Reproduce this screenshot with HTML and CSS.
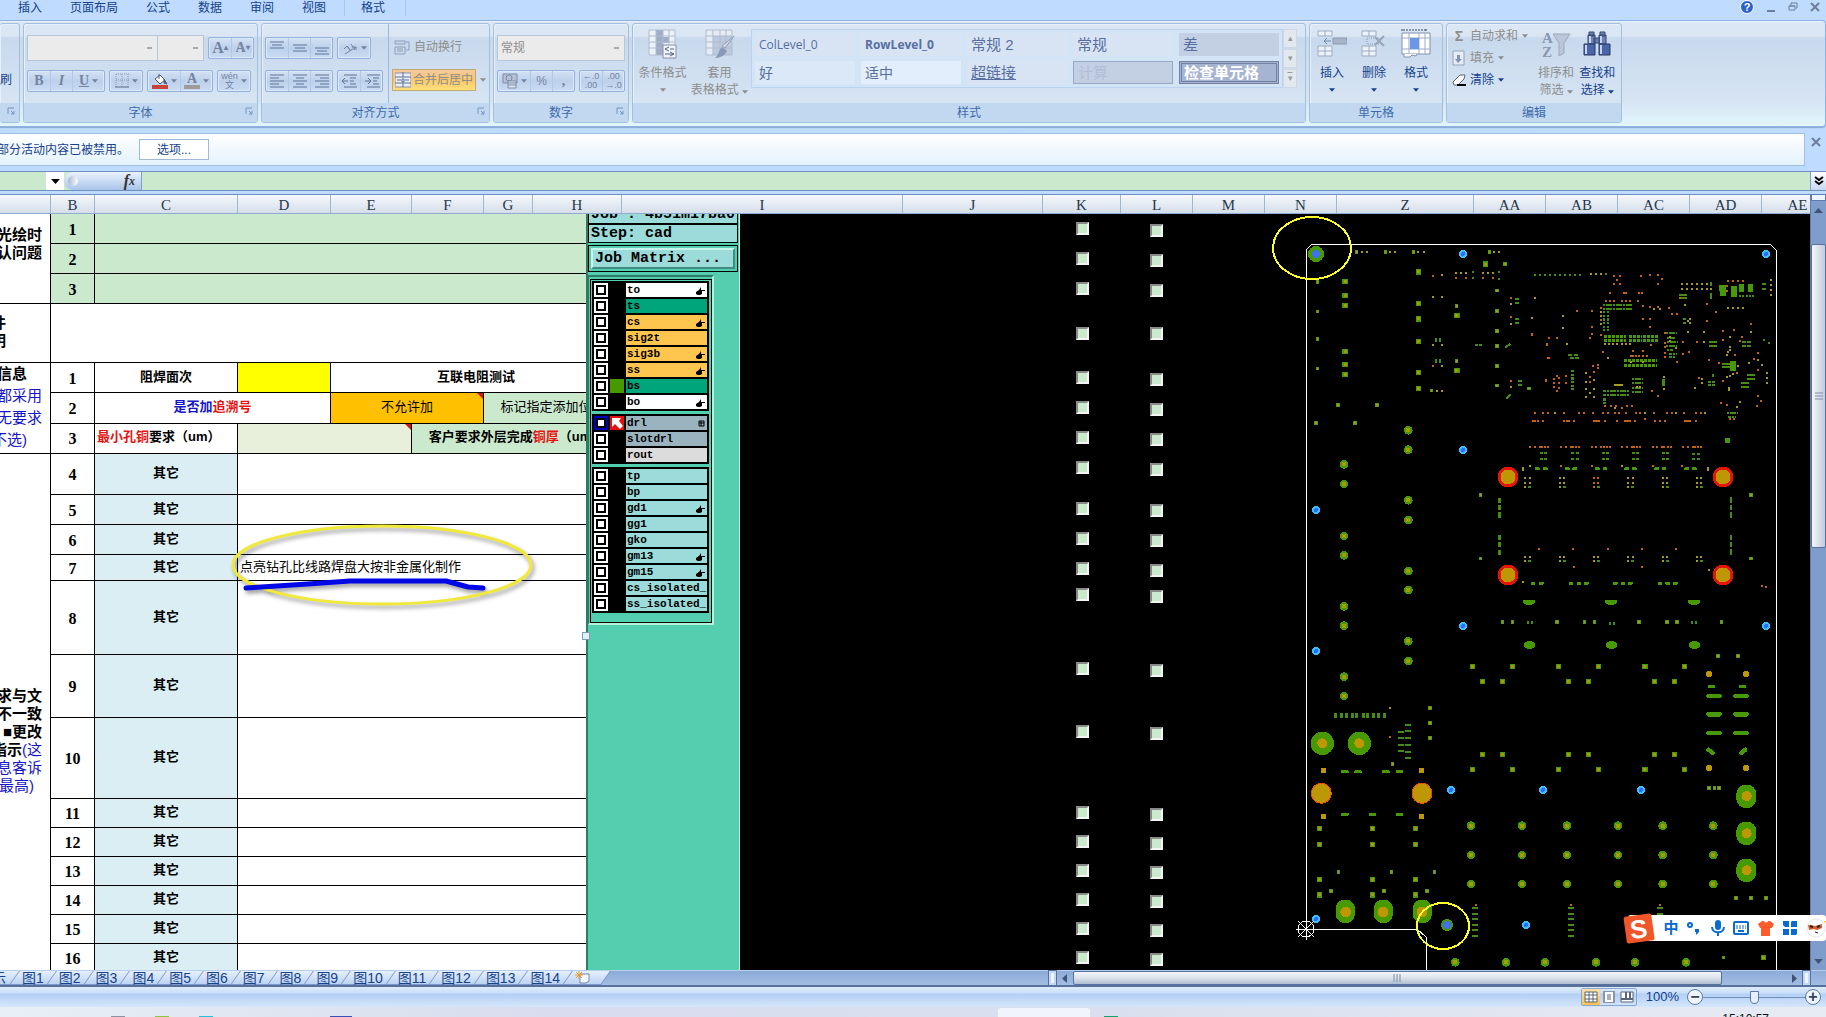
FILE: index.html
```html
<!DOCTYPE html>
<html lang="zh-CN">
  <head>
    <meta charset="UTF-8" />
    <meta name="viewport" content="width=device-width, initial-scale=1.0" />
    <title>工程确认表</title>
    <link rel="stylesheet" href="styles.css" />
  </head>
  <body>
    <!-- shared symbols -->
    <svg class="symbols" width="0" height="0" aria-hidden="true">
      <symbol id="i-arrow" viewBox="0 0 7 4"><path d="M0 0h7L3.500 4z" fill="currentColor" /></symbol>
      <symbol id="i-launch" viewBox="0 0 8 8"><path d="M1 7V1h6M4 4l3 3M7 4v3H4" stroke="#7494bd" fill="none" /></symbol>
      <symbol id="i-x" viewBox="0 0 10 10"><path d="M1 1l8 8M9 1L1 9" stroke="#6e7f99" stroke-width="2" /></symbol>
      <symbol id="i-hand" viewBox="0 0 9 8"><path d="M0 5l3-2 2-3v3h4v1H6v3L4 8H2L0 7z" fill="#000" /></symbol>
    </svg>

    <nav class="menu">
      <a href="#">插入</a>
      <a href="#">页面布局</a>
      <a href="#">公式</a>
      <a href="#">数据</a>
      <a href="#">审阅</a>
      <a href="#">视图</a>
      <a href="#" class="context-tab">格式</a>
      <div class="window-tools">
        <button aria-label="帮助" class="help">?</button>
        <button aria-label="最小化"><svg width="10" height="10"><path d="M1 9h8" stroke="#6e7f99" stroke-width="2" /></svg></button>
        <button aria-label="还原"><svg width="10" height="10"><path d="M3 3V1h6v5H8M1 4h6v4H1zM1 4h6" stroke="#6e7f99" stroke-width="1" fill="none" /></svg></button>
        <button aria-label="关闭"><svg width="10" height="10"><use href="#i-x" /></svg></button>
      </div>
    </nav>

    <!-- ribbon -->
    <div class="ribbon">
      <section class="group clip-group">
        <div class="group-body"><span>式刷</span></div>
        <div class="group-name"><svg class="launch" width="8" height="8"><use href="#i-launch" /></svg></div>
      </section>

      <section class="group font-group">
        <div class="group-body rows">
          <div class="tool-row">
            <select class="combo font-name" aria-label="字体" disabled><option></option></select><select class="combo font-size" aria-label="字号" disabled><option></option></select>
            <div class="set">
              <button class="letter big" disabled>A<sup>▴</sup></button>
              <button class="letter" disabled>A<sup>▾</sup></button>
            </div>
          </div>
          <div class="tool-row">
            <div class="set">
              <button class="letter" disabled>B</button>
              <button class="letter italic" disabled>I</button>
              <button class="letter wide" disabled><u>U</u><svg width="6" height="4"><use href="#i-arrow" /></svg></button>
            </div>
            <div class="set">
              <button class="wide" aria-label="边框"><svg width="14" height="16"><path d="M1 1h13M1 7h13M1 1v13M7 1v13M13 1v13" stroke="#8d9bb5" stroke-dasharray="1 1" /><path d="M0 14h14" stroke="#5d6b85" /></svg><svg width="6" height="4"><use href="#i-arrow" /></svg></button>
            </div>
            <div class="set">
              <button class="wide" aria-label="填充颜色"><svg width="16" height="16"><path d="M3 6l5-4 5 5-5 4z" fill="#fff" stroke="#4b5d80" /><path d="M7 1v5M12 6l3 5-3-1z" stroke="#4b5d80" fill="#4b5d80" /><path d="M0 12h16v4H0z" fill="#c9423c" /></svg><svg width="6" height="4"><use href="#i-arrow" /></svg></button>
              <button class="wide letter font-color" disabled><span>A</span><svg width="6" height="4"><use href="#i-arrow" /></svg></button>
            </div>
            <div class="set">
              <button class="wide pinyin" disabled><span>wén<br />文</span><svg width="6" height="4"><use href="#i-arrow" /></svg></button>
            </div>
          </div>
        </div>
        <div class="group-name">字体<svg class="launch" width="8" height="8"><use href="#i-launch" /></svg></div>
      </section>

      <section class="group align-group">
        <div class="group-body split">
          <div class="rows">
            <div class="tool-row">
              <div class="set lines">
                <button aria-label="顶端对齐"><svg width="14" height="14"><path d="M0 1h14M2 4h10M0 7h14" /></svg></button>
                <button aria-label="垂直居中"><svg width="14" height="14"><path d="M0 4h14M2 7h10M0 10h14" /></svg></button>
                <button aria-label="底端对齐"><svg width="14" height="14"><path d="M0 7h14M2 10h10M0 13h14" /></svg></button>
              </div>
              <div class="set">
                <button class="wide" aria-label="方向" disabled><svg width="16" height="14"><path d="M2 8l3-3 3 4M5 5l4 5M9 3l4 6M3 13L14 6M10 6h4v3" fill="none" stroke="#7482a0" /></svg><svg width="6" height="4"><use href="#i-arrow" /></svg></button>
              </div>
            </div>
            <div class="tool-row">
              <div class="set lines">
                <button aria-label="左对齐"><svg width="14" height="14"><path d="M0 1h14M0 4h9M0 7h14M0 10h9M0 13h14" /></svg></button>
                <button aria-label="居中"><svg width="14" height="14"><path d="M0 1h14M3 4h8M0 7h14M3 10h8M0 13h14" /></svg></button>
                <button aria-label="右对齐"><svg width="14" height="14"><path d="M0 1h14M5 4h9M0 7h14M5 10h9M0 13h14" /></svg></button>
              </div>
              <div class="set lines">
                <button aria-label="减少缩进"><svg width="16" height="14"><path d="M3 1h13M9 4h6M9 7h4M9 10h6M3 13h13M7 7H1M4 4L1 7l3 3" /></svg></button>
                <button aria-label="增加缩进"><svg width="16" height="14"><path d="M3 1h13M9 4h6M9 7h4M9 10h6M3 13h13M7 7H1M4 4l3 3-3 3" /></svg></button>
              </div>
            </div>
          </div>
          <div class="rows wrap-tools">
            <button class="text-tool off" disabled><svg width="16" height="16"><path d="M1 2h10v3H1zM1 8h10v7H1zM3 10h6M3 12h6M12 3h3v8h-3" fill="none" stroke="#8d9bb5" /></svg>自动换行</button>
            <div class="tool-row">
              <button class="text-tool merge off"><svg width="16" height="16"><path d="M0 1h16v14H0z" fill="#e7eefa" stroke="#8793ad" /><path d="M0 5h16M0 11h16M8 0v5M8 11v4M2 8h4M10 8h4M7 7h2v3H7z" stroke="#60708f" fill="none" /></svg>合并后居中</button>
              <svg class="off" width="6" height="4"><use href="#i-arrow" /></svg>
            </div>
          </div>
        </div>
        <div class="group-name">对齐方式<svg class="launch" width="8" height="8"><use href="#i-launch" /></svg></div>
      </section>

      <section class="group number-group">
        <div class="group-body rows">
          <div class="tool-row">
            <select class="combo number-format" aria-label="数字格式" disabled><option>常规</option></select>
          </div>
          <div class="tool-row between">
            <div class="set">
              <button class="wide" aria-label="会计数字格式" disabled><svg width="16" height="16"><path d="M1 1h14v9H1z" fill="#b6c1d6" stroke="#7d8ba8" /><circle cx="7" cy="5" r="3" fill="none" stroke="#7d8ba8" /><path d="M6 8h8v7H6zM6 10h8M6 12h8" fill="#dfe5f0" stroke="#7d8ba8" /></svg><svg width="6" height="4"><use href="#i-arrow" /></svg></button>
              <button disabled>%</button>
              <button class="letter" disabled>,</button>
            </div>
            <div class="set">
              <button class="decimals" disabled>←.0<br />.00</button>
              <button class="decimals" disabled>.00<br />→.0</button>
            </div>
          </div>
        </div>
        <div class="group-name">数字<svg class="launch" width="8" height="8"><use href="#i-launch" /></svg></div>
      </section>

      <section class="group style-group">
        <div class="group-body">
          <button class="big-tool off" disabled>
            <svg width="30" height="30"><path d="M1 1h26v25H1z" fill="#edf1f8" /><path d="M8 1h7v25H8zM15 8h6v6h-6z" fill="#9eacc6" /><path d="M1 1h26v25H1zM1 7h26M1 13h26M1 19h26M8 1v25M15 1v25M21 1v25" fill="none" stroke="#b0bbcf" /><path d="M15 16h13v13H15z" fill="#f1f4f9" stroke="#8290ae" /><path d="M21 18l-4 2 4 2M22 20h4M17 25h9M22 27l4-2-4-2" fill="none" stroke="#566684" /></svg>
            <span>条件格式</span><svg width="6" height="4"><use href="#i-arrow" /></svg>
          </button>
          <button class="big-tool off" disabled>
            <svg width="30" height="30"><path d="M1 1h26v25H1z" fill="#e6ecf5" /><path d="M8 7h19v19H8z" fill="#bcc9df" /><path d="M1 1h26v25H1zM1 7h26M1 13h26M1 19h26M8 1v25M15 1v25M21 1v25" fill="none" stroke="#b0bbcf" /><path d="M29 7l-9 12-3-2z" fill="#d4dae6" stroke="#909db5" /><path d="M17 18l5 4c-3 5-7 7-12 7 4-3 3-7 7-11z" fill="#8898b6" /></svg>
            <span>套用</span><span>表格格式 <svg width="6" height="4"><use href="#i-arrow" /></svg></span>
          </button>
          <div class="gallery">
            <button class="s-small">ColLevel_0</button>
            <button class="s-small s-bold">RowLevel_0</button>
            <button>常规 2</button>
            <button>常规</button>
            <button class="s-bad">差</button>
            <button class="s-good">好</button>
            <button class="s-neutral">适中</button>
            <button class="s-link">超链接</button>
            <button class="s-calc">计算</button>
            <button class="s-check">检查单元格</button>
          </div>
          <div class="gallery-scroll">
            <button aria-label="上一行">▴</button>
            <button aria-label="下一行">▾</button>
            <button aria-label="其他" class="more">▾</button>
          </div>
        </div>
        <div class="group-name">样式</div>
      </section>

      <section class="group cells-group">
        <div class="group-body">
          <button class="big-tool">
            <svg width="30" height="30"><path d="M1 2h14v5H1zM8 2v5M1 17h14v10H1zM1 22h14M8 17v10" fill="#edf2f9" stroke="#9cabc4" /><path d="M16 9h14v6H16z" fill="#a8b4c9" stroke="#8c99b2" /><path d="M14 12H7M10 9l-3 3 3 3" fill="none" stroke="#7386a8" /></svg>
            <span>插入</span><svg width="6" height="4"><use href="#i-arrow" /></svg>
          </button>
          <button class="big-tool">
            <svg width="30" height="30"><path d="M3 2h14v5H3zM10 2v5M3 17h14v10H3zM3 22h14M10 17v10" fill="#edf2f9" stroke="#9cabc4" /><path d="M8 9h12v6H8z" fill="none" stroke="#8c99b2" stroke-dasharray="1 1" /><path d="M16 8l9 9M25 7l-9 9" stroke="#9aa5b8" stroke-width="2" /></svg>
            <span>删除</span><svg width="6" height="4"><use href="#i-arrow" /></svg>
          </button>
          <button class="big-tool">
            <svg width="30" height="30"><path d="M1 4h28v21H1z" fill="#fff" stroke="#7f90af" /><path d="M1 9h28M1 20h28M8 4v21M18 4v21M24 4v21" stroke="#9aabca" /><path d="M9 9h9v11H9z" fill="#6d97e6" /><path d="M1 0v3M25 0v3M2 1h23" stroke="#3b4b68" stroke-dasharray="2 1" /><path d="M3 25v3h6l2-2 4 1 1-2" fill="#fff" stroke="#7f90af" /></svg>
            <span>格式</span><svg width="6" height="4"><use href="#i-arrow" /></svg>
          </button>
        </div>
        <div class="group-name">单元格</div>
      </section>

      <section class="group edit-group">
        <div class="group-body">
          <div class="edit-list">
            <button class="text-tool off" disabled><b>Σ</b>自动求和 <svg width="6" height="4"><use href="#i-arrow" /></svg></button>
            <button class="text-tool off" disabled><svg width="14" height="16"><path d="M1 1h11v14H1z" fill="#e6ecf5" stroke="#93a2bd" /><path d="M5 5h3v4h2l-4 4-3-4h2z" fill="#8292b2" /></svg>填充 <svg width="6" height="4"><use href="#i-arrow" /></svg></button>
            <button class="text-tool"><svg width="14" height="16"><path d="M1 10l7-7h5l-1 4-6 6H2z" fill="#fff" stroke="#56627a" /><path d="M5 13h9" stroke="#000" stroke-width="2" /></svg>清除 <svg width="6" height="4"><use href="#i-arrow" /></svg></button>
          </div>
          <button class="big-tool off" disabled>
            <svg width="30" height="30"><path d="M12 5h17l-6 9v10l-5 3V14z" fill="#bcc6d8" stroke="#9ba7bd" /><text x="1" y="14" class="sort-letter">A</text><text x="1" y="28" class="sort-letter">Z</text></svg>
            <span>排序和</span><span>筛选 <svg width="6" height="4"><use href="#i-arrow" /></svg></span>
          </button>
          <button class="big-tool">
            <svg width="30" height="30"><path d="M7 3h5v4H7zM18 3h5v4h-5zM6 6h7v9H6zM17 6h7v9h-7zM12 9h6v5h-6z" fill="#6d83ba" stroke="#35466f" /><path d="M2 15h11v11H2zM17 15h11v11H17z" fill="#4b66a8" stroke="#263762" /><path d="M4 16v9M19 16v9M8 7v7M19 7v7" stroke="#c7d5f2" stroke-width="2" /></svg>
            <span>查找和</span><span>选择 <svg width="6" height="4"><use href="#i-arrow" /></svg></span>
          </button>
        </div>
        <div class="group-name">编辑</div>
      </section>
    </div>

    <!-- security message -->
    <div class="message-row">
      <div class="message">
        <span>部分活动内容已被禁用。</span>
        <button>选项...</button>
      </div>
      <button class="plain" aria-label="关闭消息栏"><svg width="10" height="10"><use href="#i-x" /></svg></button>
    </div>

    <div class="formula-row">
      <input class="name-box" aria-label="名称框" />
      <button class="name-drop" aria-label="名称列表"><svg width="9" height="5"><use href="#i-arrow" /></svg></button>
      <button class="fx"><i></i>f<small>x</small></button>
      <input class="formula" aria-label="编辑栏" />
      <button class="expand" aria-label="展开编辑栏"><svg width="10" height="10"><path d="M1 1l4 3 4-3M1 5l4 3 4-3" fill="none" stroke="#000" stroke-width="2" /></svg></button>
    </div>

    <!-- worksheet -->
    <div class="workbook">
      <div class="sheet">
        <div class="col-heads">
          <span></span><span>B</span><span>C</span><span>D</span><span>E</span><span>F</span><span>G</span><span>H</span><span>I</span><span>J</span><span>K</span><span>L</span><span>M</span><span>N</span><span>Z</span><span>AA</span><span>AB</span><span>AC</span><span>AD</span><span>AE</span>
        </div>
        <div class="sheet-body">
          <div class="cells">
            <table>
              <colgroup>
                <col class="w-a" /><col class="w-b" /><col class="w-c" /><col class="w-d" /><col class="w-e" /><col class="w-f" /><col class="w-g" /><col class="w-h" />
              </colgroup>
              <tr class="h30"><td rowspan="3" class="side top"><div><p>光绘时</p><p>认问题</p></div></td><td class="no green">1</td><td colspan="6" class="green"></td></tr>
              <tr class="h30"><td class="no green">2</td><td colspan="6" class="green"></td></tr>
              <tr class="h30"><td class="no green">3</td><td colspan="6" class="green"></td></tr>
              <tr class="h59"><td class="side"><div><p class="in-3">件</p><p class="in-3">明</p></div></td><td colspan="7"></td></tr>
              <tr class="h30"><td rowspan="3" class="side loose"><div><p class="in-1">信息</p><p class="blue">都采用</p><p class="blue">无要求</p><p class="blue in-1">不选)</p></div></td><td class="no">1</td><td class="label">阻焊面次</td><td class="yellow"></td><td colspan="4" class="label">互联电阻测试</td></tr>
              <tr class="h30"><td class="no">2</td><td colspan="2" class="label"><span class="blue">是否加</span><span class="red">追溯号</span></td><td colspan="2" class="orange noted">不允许加</td><td colspan="2" class="green">标记指定添加位置</td></tr>
              <tr class="h30"><td class="no">3</td><td class="label left"><span class="red">最小孔铜</span>要求（um）</td><td colspan="2" class="pale noted"></td><td colspan="3" class="label green"><span>客户要求外层完成<span class="red">铜厚</span>（um）</span></td></tr>
              <tr class="h41"><td rowspan="15" class="side"><div><p>求与文</p><p>不一致</p><p>■更改</p><p>指示<span class="blue">(这</span></p><p class="blue">息客诉</p><p class="blue in-half">最高)</p></div></td><td class="no">4</td><td class="label other">其它</td><td colspan="5"></td></tr>
              <tr class="h30"><td class="no">5</td><td class="label other">其它</td><td colspan="5"></td></tr>
              <tr class="h30"><td class="no">6</td><td class="label other">其它</td><td colspan="5"></td></tr>
              <tr class="h26"><td class="no">7</td><td class="label other">其它</td><td colspan="5" class="left">点亮钻孔比线路焊盘大按非金属化制作</td></tr>
              <tr class="h74"><td class="no">8</td><td class="label other">其它</td><td colspan="5"></td></tr>
              <tr class="h63"><td class="no">9</td><td class="label other">其它</td><td colspan="5"></td></tr>
              <tr class="h81"><td class="no">10</td><td class="label other">其它</td><td colspan="5"></td></tr>
              <tr class="h29"><td class="no">11</td><td class="label other">其它</td><td colspan="5"></td></tr>
              <tr class="h29"><td class="no">12</td><td class="label other">其它</td><td colspan="5"></td></tr>
              <tr class="h29"><td class="no">13</td><td class="label other">其它</td><td colspan="5"></td></tr>
              <tr class="h29"><td class="no">14</td><td class="label other">其它</td><td colspan="5"></td></tr>
              <tr class="h29"><td class="no">15</td><td class="label other">其它</td><td colspan="5"></td></tr>
              <tr class="h29"><td class="no">16</td><td class="label other">其它</td><td colspan="5"></td></tr>
              <tr class="h29"><td class="no"></td><td class="other"></td><td colspan="5"></td></tr>
              <tr class="h29"><td class="no"></td><td class="other"></td><td colspan="5"></td></tr>
            </table>
            <svg class="mark" width="320" height="100" viewBox="225 515 320 100">
              <ellipse cx="382" cy="565" rx="149" ry="39" fill="none" stroke="#f0e93a" stroke-width="3" />
              <path d="M246 588L308 584L350 581H446L468 587L483 588" fill="none" stroke="#0008e6" stroke-width="5" stroke-linecap="round" stroke-linejoin="round" />
            </svg>
          </div>

          <!-- CAM layer list -->
          <aside class="layers">
            <div class="job">Job : 4b51m17ba0</div>
            <div class="step">Step: cad</div>
            <div class="matrix"><button>Job Matrix ...</button></div>
            <div class="layer-well">
              <div class="layer-box">
                <div class="layer-set">
                  <label class="white"><input type="checkbox" /><i></i><span>to</span><svg width="9" height="8"><use href="#i-hand" /></svg></label>
                  <label class="mask"><input type="checkbox" /><i></i><span>ts</span></label>
                  <label class="signal"><input type="checkbox" /><i></i><span>cs</span><svg width="9" height="8"><use href="#i-hand" /></svg></label>
                  <label class="signal"><input type="checkbox" /><i></i><span>sig2t</span></label>
                  <label class="signal"><input type="checkbox" /><i></i><span>sig3b</span><svg width="9" height="8"><use href="#i-hand" /></svg></label>
                  <label class="signal"><input type="checkbox" /><i></i><span>ss</span><svg width="9" height="8"><use href="#i-hand" /></svg></label>
                  <label class="mask"><input type="checkbox" /><i class="shown"></i><span>bs</span></label>
                  <label class="white"><input type="checkbox" /><i></i><span>bo</span><svg width="9" height="8"><use href="#i-hand" /></svg></label>
                </div>
                <div class="layer-set">
                  <label class="drill"><input type="checkbox" class="picked" /><i class="work"><svg width="14" height="14"><path d="M2 2h9L9 5l4 5-3 3-5-5-3 3z" fill="#fff" /></svg></i><span>drl</span><svg width="7" height="7"><path d="M1 1h5v5H1zM3 1v5M1 3h5" fill="none" stroke="#000" /></svg></label>
                  <label class="drill"><input type="checkbox" /><i></i><span>slotdrl</span></label>
                  <label class="rout"><input type="checkbox" /><i></i><span>rout</span></label>
                </div>
                <div class="layer-set">
                  <label><input type="checkbox" /><i></i><span>tp</span></label>
                  <label><input type="checkbox" /><i></i><span>bp</span></label>
                  <label><input type="checkbox" /><i></i><span>gd1</span><svg width="9" height="8"><use href="#i-hand" /></svg></label>
                  <label><input type="checkbox" /><i></i><span>gg1</span></label>
                  <label><input type="checkbox" /><i></i><span>gko</span></label>
                  <label><input type="checkbox" /><i></i><span>gm13</span><svg width="9" height="8"><use href="#i-hand" /></svg></label>
                  <label><input type="checkbox" /><i></i><span>gm15</span><svg width="9" height="8"><use href="#i-hand" /></svg></label>
                  <label><input type="checkbox" /><i></i><span>cs_isolated_</span></label>
                  <label><input type="checkbox" /><i></i><span>ss_isolated_</span></label>
                </div>
              </div>
            </div>
            <b class="handle"></b>
          </aside>

          <!-- board view -->
          <div class="board">
            <svg class="plot" width="1070" height="756" viewBox="740 214 1070 756">
              <!-- upper left quarter -->
              <svg x="1260" y="200" width="290" height="400" viewBox="0 0 870 1200">
                <defs>
                  <path id="ul-l" d="M445 691h0M445 749h0M445 901h0M445 960h0M445 1113h0M445 1170h0M252 793h0M252 852h0M252 1008h0M252 1066h0" />
                  <path id="ul-m" d="M255 244h0M255 286h0M255 316h0M255 454h0M255 493h0M255 523h0M475 215h0M475 310h0M475 356h0M475 424h0M475 517h0M475 565h0M590 346h0M590 511h0M676 192h0" />
                  <path id="ul-s" d="M172 246h0M172 335h0M172 417h0M172 506h0M234 615h0M351 615h0M168 669h0M285 669h0M590 318h0M590 483h0M711 272h0M711 333h0M711 393h0M711 438h0M711 498h0M711 557h0M735 192h0M662 885h0M662 1075h0M290 156h0M376 156h0M460 156h0M688 156h0M514 572h0M807 565h0" />
                </defs>
                <use href="#ul-l" class="green-l" /><use href="#ul-l" class="olive-l" />
                <use href="#ul-m" class="green-m" /><use href="#ul-m" class="olive-m" />
                <use href="#ul-s" class="green-s" /><use href="#ul-s" class="olive-s" />
                <path class="dot-o" d="M306 157h0M321 157h0M391 157h0M406 157h0M475 157h0M491 157h0M703 157h0M718 157h0M547 226h0M547 290h0M547 434h0M547 499h0M530 573h0M545 573h0M752 313h0M752 371h0M752 562h0M825 294h0M816 354h0M518 290h0M518 434h0M604 219h0M589 219h0M619 219h0M669 219h0M684 219h0M698 219h0M825 226h0M840 226h0M855 226h0" />
                <path class="dot-r" d="M518 228h0M589 233h0M619 235h0M669 235h0M698 235h0M518 498h0M752 293h0M752 351h0M752 543h0M816 405h0M867 415h0M862 434h0M867 474h0M858 542h0" />
                <path class="dot-g" d="M639 217h0M639 234h0M718 217h0M718 236h0M528 418v6M540 418v6M528 480v6M540 480v6M647 436h3M660 436h3M768 298h6M768 308h6M768 357h6M768 369h6M777 544h6M777 556h6M739 441l9 -8M741 594l9 -8" />
                <path class="tall-g" d="M718 897v8M718 920v6M718 940v10M718 1008v8M718 1030v8M718 1053v8" />
              </svg>

              <!-- upper right quarter -->
              <svg x="1500" y="200" width="326" height="400" viewBox="0 0 978 1200">
                <path class="dot-g" d="M105 225h0M120 225h0M135 225h0M150 225h0M165 225h0M180 225h0M195 225h0M210 225h0M225 225h0M240 225h0M317 222h0M540 284h18M540 295h18M634 250v4M634 283v12M720 287v0M730 287v0M740 287v0M750 287v0M760 287v0M788 252h6M788 266h6M788 252v0M552 357h3M552 369h3M630 427h6M643 427h6M630 437h6M643 437h6M730 427h6M743 427h6M730 437h6M743 437h6M792 420h0M807 430h0M668 492h6M680 492h6M668 502h6M680 502h6M745 525h6M757 525h6M745 538h6M757 538h6M726 550h6M739 550h6M726 562h6M739 562h6M801 518h0M801 533h0M801 548h0M640 525v3M628 545h3M640 545h3M628 556h3M640 556h3M208 464h6M226 464h6M214 475h6M228 475h6" />
                <path class="dot-o" d="M272 223h0M287 223h0M302 223h0M545 252h0M560 252h0M575 252h0M590 252h0M605 252h0M620 252h0M545 267h0M560 267h0M575 267h0M590 267h0M605 267h0M620 267h0M634 267h0M813 240h0M813 254h0M813 270h0M813 284h0M685 325h0M700 325h0M715 325h0M730 325h0M105 294h0M96 354h0M189 348h0M189 383h0M462 326h0M480 326h0M555 315h0M563 395h0M570 358h0M570 368h0M564 363h0M303 335h0M303 348h0M303 372h0M315 432h0M327 432h0M339 432h0M351 432h0M367 432h0M379 432h0M391 432h0M200 432h0M324 474h0M612 397h0M690 411h0M690 440h0M690 449h0M685 457h0M680 464h0M612 426h0M714 498h0M690 528h0M698 522h0M682 532h0M687 563v6M606 538h0M606 549h0M585 563h0M257 520h0M257 545h0M257 568h0M282 540h0M282 568h0M270 580h0M257 591h0M282 591h0M492 532h0M492 567h0M345 555h20M345 625h0M720 605h0M712 620h0M753 395h0M773 480h0M748 490h0M786 496h0M70 805v6M624 805v6M70 1147h0" />
                <path class="dot-r" d="M343 229h0M361 229h0M352 240h0M343 253h0M361 253h0M424 229h0M450 226h0M473 226h0M485 238h0M473 253h0M331 280h0M371 280h6M416 280h0M426 280h0M318 304h0M330 304h0M343 304h0M367 304h0M379 304h0M391 304h0M415 304h0M430 317h0M450 322h0M474 320h0M508 324h0M517 342h0M530 342h0M430 356h0M450 356h0M450 380h0M277 333h0M277 382h0M277 403h0M271 415h0M232 333h0M148 415h0M172 415h0M142 433h0M145 474h0M303 325h0M303 360h0M303 405h0M308 455h0M400 452h0M428 452h0M452 436h0M392 468h0M400 468h0M409 468h0M418 468h0M428 468h0M440 468h0M494 400h0M494 430h0M494 442h0M494 460h0M494 472h0M685 243h0M700 243h0M715 243h0M730 243h0M680 258h0M680 273h0M540 295h0M621 313h0M621 362h0M649 336h0M753 372h0M702 391h0M670 394h0M592 425h0M668 419h0M726 410h0M720 423h0M773 458h0M762 478h0M773 510h0M706 464h0M628 481h0M657 490h0M550 463h0M567 455h0M531 487h0M550 425h0M668 544h0M710 518h0M597 533h0M137 541h0M163 537h0M172 528h0M178 535h0M163 549h0M178 549h0M163 562h0M172 572h0M178 565h0M197 528h0M197 548h0M270 532h0M282 516h0M270 546h0M280 498h0M294 495h0M294 504h0M455 573h0M473 587h0M662 610h0M680 615h0M773 588h0M782 603h0M770 619h0M690 656h0M703 656h0M33 293h0M33 351h0M33 543h0M315 617h0M333 617h0M348 617h0M365 625h0M380 617h0M395 617h0M96 403h0" />
                <path class="dot-r" d="M105 638h0M129 638h0M144 638h0M193 638h0M238 638h0M252 638h0M280 638h0M309 638h0M324 638h0M345 638h0M358 638h0M377 638h0M407 638h0M420 638h0M462 638h0M500 638h0M515 638h0M553 638h0M588 638h0M602 638h0M98 664h7M115 664h0M129 664h0M192 664h0M200 664h8M222 664h0M282 664h8M298 664h0M314 664h0M350 664h0M375 664h15M405 664h0M465 664h0M481 664h0M496 664h0M555 664h15M587 664h0M435 658h0" />
                <path class="dot-r" d="M90 742h0M104 742h0M119 742h0M126 742h0M136 742h0M145 742h0M184 742h0M198 742h0M213 742h0M220 742h0M229 742h0M238 742h0M275 742h0M289 742h0M303 742h0M312 742h0M321 742h0M330 742h0M366 742h0M380 742h0M395 742h0M402 742h0M411 742h0M420 742h0M458 742h0M472 742h0M486 742h0M493 742h0M503 742h0M512 742h0M549 742h0M563 742h0M578 742h0M585 742h0M594 742h0M603 742h0M184 798h0M275 798h0M458 798h0M547 798h0M118 1048h0M220 1048h0M324 1048h0M426 1048h0M528 1048h0M221 1101h0M426 1101h0M786 1158h0M798 1160h0M282 833h0M295 833h0M282 848h0M295 848h0M282 862h0" />
                <path class="dot-o" d="M165 638h0M435 638h0M528 638h0M615 638h0M90 798h0M366 798h0M628 1109h0M76 833h0M89 833h0M76 848h0M89 848h0M76 862h0M180 833h0M193 833h0M180 848h0M193 848h0M180 862h0M385 833h0M398 833h0M385 848h0M398 848h0M385 862h0M488 833h0M500 833h0M488 848h0M500 848h0M488 862h0M591 833h0M604 833h0M591 848h0M604 848h0M591 862h0M76 1070h0M89 1070h0M76 1084h0M180 1070h0M193 1070h0M180 1084h0M282 1070h0M295 1070h0M282 1084h0M385 1070h0M398 1070h0M385 1084h0M488 1070h0M500 1070h0M488 1084h0M591 1070h0M604 1070h0M591 1084h0" />
                <path class="dot-g" d="M88 862h3M192 862h3M294 862h3M397 862h3M500 862h3M603 862h3M88 1084h3M192 1084h3M294 1084h3M397 1084h3M500 1084h3M603 1084h3M122 760h3M136 760h3M122 777h3M136 777h3M215 760h3M230 760h3M215 777h3M230 777h3M308 760h3M320 760h3M308 777h3M320 777h3M399 760h3M412 760h3M399 777h3M412 777h3M489 760h3M502 760h3M489 777h3M502 777h3M580 763h3M593 763h3M580 778h3M593 778h3" />
                <path class="oval-g" d="M109 806h6M133 806h6M199 806h6M221 806h6M289 806h6M312 806h6M377 806h6M400 806h6M467 806h6M489 806h6M557 806h6M580 806h6M96 1150h6M121 1150h6M210 1150h6M234 1150h6M256 1150h6M343 1150h6M366 1150h6M388 1150h6M477 1150h6M500 1150h6M523 1150h6" />
                <path class="tall-g" d="M693 896v8M693 918v8M693 940v10M693 1008v8M693 1030v8M693 1052v8M490 542v12" />
                <path class="rows-g" d="M308 315h92M308 327h92M310 574h80M310 584h80M395 537h34M395 550h34M395 563h34M395 576h34M680 638h34M685 650h24M497 400h34M500 414h26M500 426h34M497 438h34M500 450h20M508 462h24M508 472h20" />
                <path class="cols-g" d="M312 333v60M324 333v60M217 510v60M313 595v20" />
                <path class="block-g" d="M312 410h66M312 421h66M388 410h38M388 421h38M430 410h46M430 421h46M372 481h100M372 497h100" />
                <path class="green-m" d="M666 264h3M668 280h0M702 265h0M702 281h0M724 260v6M751 260v6M698 491h2M698 505h2M682 721h0" />
                <path class="dot-o" d="M392 487h0M428 487h0M410 560h0M421 560h0M510 412h0M510 424h0M527 445h0" />
                <path class="green-s" d="M753 885h0M753 1075h0" /><path class="olive-s" d="M753 885h0M753 1075h0M801 518h0M801 533h0M801 548h0" />
              </svg>

              <!-- lower left quarter -->
              <svg x="1260" y="600" width="290" height="417" viewBox="0 0 870 1251">
                <defs>
                  <path id="ll-l" d="M252 19h0M252 77h0M252 230h0M252 288h0M445 124h0M445 183h0M633 677h0M633 765h0M633 852h0M786 677h0M786 765h0M786 852h0M586 1087h0M738 1087h0M855 1087h0" />
                  <path id="ll-m" d="M178 685h0M178 733h0M178 838h0M178 884h0M337 685h0M337 733h0M337 838h0M337 884h0M466 685h0M466 733h0M466 838h0M466 884h0M637 199h0M757 199h0M667 244h0M727 244h0M667 463h0M727 463h0M637 508h0M757 508h0" />
                  <path id="ll-s" d="M510 324h0M510 369h0M510 414h0M398 492h0M235 816h0M394 816h0M523 816h0M213 873h0M372 873h0M501 873h0M727 66h0M757 66h0" />
                </defs>
                <use href="#ll-l" class="green-l" /><use href="#ll-l" class="olive-l" />
                <use href="#ll-m" class="green-m" /><use href="#ll-m" class="olive-m" />
                <use href="#ll-s" class="green-s" /><use href="#ll-s" class="olive-s" />
                <path class="strip-g" d="M226 339v14M244 339v14M259 339v14M278 339v14M289 339v14M310 339v14M322 339v14M340 339v14M355 339v14M373 339v14" />
                <path class="oval-g" d="M246 515h16M287 515h14M369 515h16M411 515h14M246 643h16M330 643h14M411 643h14" />
                <path class="dot-g" d="M418 395h10M418 415h10M418 434h10M418 452h10M439 376h10M439 394h10M439 415h10M439 434h10M439 455h10M439 473h10M803 66v4M815 66v4M640 925h10M640 943h10M640 958h10M640 976h10M640 989h10M640 1009h10" />
                <path class="dot-r" d="M390 411h0M647 914h0" /><path class="dot-o" d="M390 324h0" />
                <path class="orange-m" d="M190 511h0M484 511h0M190 649h0M484 649h0" />
                <g class="big-green"><circle cx="187" cy="430" r="35" /><circle cx="298" cy="430" r="35" /><rect x="227" y="899" width="58" height="70" rx="27" /><rect x="341" y="899" width="58" height="70" rx="27" /><rect x="458" y="899" width="58" height="70" rx="27" /></g>
                <g class="orange"><circle cx="187" cy="430" r="15" /><circle cx="298" cy="430" r="15" /><circle cx="257" cy="936" r="16" /><circle cx="369" cy="936" r="16" /><circle cx="486" cy="936" r="16" /></g>
                <g class="orange ring-thin"><circle cx="184" cy="580" r="30" /><circle cx="486" cy="580" r="30" /></g>
              </svg>

              <!-- lower right quarter -->
              <svg x="1500" y="600" width="326" height="417" viewBox="0 0 978 1251">
                <defs>
                  <path id="lr-l" d="M201 677h0M201 765h0M201 852h0M354 677h0M354 765h0M354 852h0M488 677h0M488 765h0M488 852h0M640 677h0M640 765h0M640 852h0M288 1087h0M405 1087h0M558 1087h0" />
                  <path id="lr-m" d="M175 199h0M295 199h0M434 199h0M553 199h0M205 244h0M265 244h0M463 244h0M523 244h0M205 463h0M265 463h0M463 463h0M523 463h0M175 508h0M295 508h0M434 508h0M553 508h0M790 1072h0" />
                  <path id="lr-s" d="M171 66h0M253 66h0M283 66h0M417 66h0M501 66h0M531 66h0M664 66h0M654 168h0M714 168h0M627 564h0M643 564h0M657 564h0M708 894h0M753 894h0M798 894h0M670 1072h0" />
                </defs>
                <use href="#lr-l" class="green-l" /><use href="#lr-l" class="olive-l" />
                <use href="#lr-m" class="green-m" /><use href="#lr-m" class="olive-m" />
                <use href="#lr-s" class="green-s" /><use href="#lr-s" class="olive-s" />
                <path class="dot-g" d="M330 68v4M342 68v4M576 66v4M588 66v4M208 925h10M208 943h10M208 958h10M208 976h10M208 989h10M208 1008h10M475 925h10M475 943h10" />
                <path class="dot-r" d="M214 914h0M480 914h0" />
                <path class="oval-g" d="M627 259h14M720 259h14" />
                <path class="bar-g" d="M625 288h34M706 288h34M625 343h34M706 343h34M625 398h34M706 398h34M625 449l14 10M736 449l-12 10" />
                <g class="big-green"><ellipse cx="87" cy="3" rx="19" ry="12" /><ellipse cx="333" cy="3" rx="19" ry="12" /><ellipse cx="582" cy="3" rx="19" ry="12" /><ellipse cx="88" cy="135" rx="17" ry="12" /><ellipse cx="334" cy="135" rx="17" ry="12" /><ellipse cx="583" cy="135" rx="17" ry="12" /><rect x="709" y="554" width="60" height="70" rx="28" /><rect x="709" y="665" width="60" height="70" rx="28" /><rect x="709" y="776" width="60" height="70" rx="28" /></g>
                <g class="orange"><circle cx="627" cy="222" r="9" /><circle cx="738" cy="222" r="9" /><circle cx="627" cy="504" r="9" /><circle cx="738" cy="504" r="9" /><circle cx="740" cy="588" r="15" /><circle cx="740" cy="700" r="15" /><circle cx="740" cy="811" r="15" /></g>
              </svg>

              <g class="orange ring"><circle cx="1508" cy="477" r="9" /><circle cx="1723" cy="477" r="9" /><circle cx="1508" cy="575" r="9" /><circle cx="1723" cy="575" r="9" /></g>
              <g class="big-green"><circle cx="1316" cy="254" r="8" /><circle cx="1447" cy="925" r="6" /></g>
              <g class="hole"><circle cx="1463" cy="254" r="3" /><circle cx="1463" cy="450" r="3" /><circle cx="1316" cy="510" r="3" /><circle cx="1766" cy="254" r="3" /><circle cx="1316" cy="651" r="3" /><circle cx="1463" cy="626" r="3" /><circle cx="1766" cy="626" r="3" /><circle cx="1451" cy="790" r="3" /><circle cx="1543" cy="790" r="3" /><circle cx="1641" cy="790" r="3" /><circle cx="1316" cy="919" r="3" /><circle cx="1526" cy="925" r="3" /></g>
              <g class="lit"><circle cx="1316" cy="254" r="4" /><circle cx="1447" cy="925" r="4" /></g>
              <path class="outline" d="M1306 929V250L1312 244H1770L1776 250V970M1306 929H1417L1426 937V970" />
              <path class="outline" d="M1296 929h20M1306 919v20M1298 921l16 16M1314 921l-16 16M1298 929a8 8 0 1 0 16 0a8 8 0 1 0 -16 0" />
              <g class="circled"><ellipse cx="1312" cy="248" rx="39" ry="31" /><ellipse cx="1443" cy="926" rx="26" ry="23" /></g>
            </svg>

            <div class="ticks">
              <input type="checkbox" aria-label="K1" /><input type="checkbox" aria-label="L1" />
              <input type="checkbox" aria-label="K2" /><input type="checkbox" aria-label="L2" />
              <input type="checkbox" aria-label="K3" /><input type="checkbox" aria-label="L3" />
              <input type="checkbox" aria-label="K说明" class="mid" /><input type="checkbox" aria-label="L说明" class="mid" />
              <input type="checkbox" aria-label="K信息1" /><input type="checkbox" aria-label="L信息1" />
              <input type="checkbox" aria-label="K信息2" /><input type="checkbox" aria-label="L信息2" />
              <input type="checkbox" aria-label="K信息3" /><input type="checkbox" aria-label="L信息3" />
              <input type="checkbox" aria-label="K4" /><input type="checkbox" aria-label="L4" />
              <input type="checkbox" aria-label="K5" /><input type="checkbox" aria-label="L5" />
              <input type="checkbox" aria-label="K6" /><input type="checkbox" aria-label="L6" />
              <input type="checkbox" aria-label="K7" /><input type="checkbox" aria-label="L7" />
              <input type="checkbox" aria-label="K8" /><input type="checkbox" aria-label="L8" />
              <input type="checkbox" aria-label="K9" /><input type="checkbox" aria-label="L9" />
              <input type="checkbox" aria-label="K10" /><input type="checkbox" aria-label="L10" />
              <input type="checkbox" aria-label="K11" /><input type="checkbox" aria-label="L11" />
              <input type="checkbox" aria-label="K12" /><input type="checkbox" aria-label="L12" />
              <input type="checkbox" aria-label="K13" /><input type="checkbox" aria-label="L13" />
              <input type="checkbox" aria-label="K14" /><input type="checkbox" aria-label="L14" />
              <input type="checkbox" aria-label="K15" /><input type="checkbox" aria-label="L15" />
              <input type="checkbox" aria-label="K16" /><input type="checkbox" aria-label="L16" />
            </div>
          </div>
        </div>
      </div>
      <div class="vscroll">
        <i class="split-box"></i>
        <button aria-label="向上滚动"><svg width="9" height="5"><path d="M0 5h9L4.500 0z" fill="#3f5475" /></svg></button>
        <div class="vtrack"><div class="vthumb"><svg width="8" height="8"><path d="M0 1h8M0 4h8M0 7h8" stroke="#7c8ca8" /></svg></div></div>
        <button aria-label="向下滚动"><svg width="9" height="5"><use href="#i-arrow" /></svg></button>
      </div>
    </div>

    <!-- sheet tabs and horizontal scroll -->
    <div class="tab-row">
      <div class="sheet-tabs">
        <a href="#" class="cut">示</a><a href="#">图1</a><a href="#">图2</a><a href="#">图3</a><a href="#">图4</a><a href="#">图5</a><a href="#">图6</a><a href="#">图7</a><a href="#">图8</a><a href="#">图9</a><a href="#">图10</a><a href="#">图11</a><a href="#">图12</a><a href="#">图13</a><a href="#">图14</a>
        <a href="#" class="new-tab" aria-label="插入工作表"><svg width="16" height="14"><path d="M5 3h9v7l-3 2H5z" fill="#f4f8ff" stroke="#7386a8" /><path d="M4 0v8M0 4h8M1 1l6 6M7 1L1 7" stroke="#e79b2c" /></svg></a>
      </div>
      <div class="hscroll">
        <i class="split-box"></i>
        <button aria-label="向左滚动"><svg width="5" height="9"><path d="M5 0v9L0 4.500z" fill="#3f5475" /></svg></button>
        <div class="htrack"><div class="hthumb"><svg width="8" height="8"><path d="M1 0v8M4 0v8M7 0v8" stroke="#7c8ca8" /></svg></div></div>
        <button aria-label="向右滚动"><svg width="5" height="9"><path d="M0 0v9l5-4.500z" fill="#3f5475" /></svg></button>
        <i class="split-box"></i>
      </div>
    </div>

    <div class="status">
      <div class="views">
        <button aria-label="普通" class="on"><svg width="14" height="12"><path d="M1 1h12v10H1z" fill="#fff" /><path d="M1 1h12v10H1zM1 4h12M1 8h12M5 1v10M9 1v10" fill="none" stroke="#5b6478" /></svg></button>
        <button aria-label="页面布局"><svg width="14" height="12"><path d="M1 0h12v12H1z" fill="#8b95a8" /><path d="M3 1h8v10H3z" fill="#fff" /><path d="M5 4h4M5 6h4M5 8h4" stroke="#5b6478" /></svg></button>
        <button aria-label="分页预览"><svg width="14" height="12"><path d="M1 1h12v10H1z" fill="#fff" stroke="#5b6478" /><path d="M6 1v6M10 1v6M1 8h12" stroke="#5b6478" stroke-width="2" /></svg></button>
      </div>
      <span class="percent">100%</span>
      <button class="round" aria-label="缩小">−</button>
      <input type="range" aria-label="显示比例" min="0" max="100" value="50" />
      <button class="round" aria-label="放大">+</button>
    </div>

    <div class="taskbar">
      <i class="app grey"></i><i class="app lime"></i><i class="app cyan"></i><i class="app navy"></i>
      <i class="active-app"></i><i class="app jade"></i>
      <time>15:10:57</time>
    </div>

    <!-- floating input method bar -->
    <div class="ime">
      <svg width="34" height="32"><rect x="3" y="3" width="28" height="27" rx="2" fill="#f0562a" transform="rotate(-8 17 16)" /><text x="8" y="26" class="ime-s" transform="rotate(-6 17 16)">S</text></svg>
      <b>中</b>
      <svg width="16" height="16"><circle cx="4" cy="5" r="2" fill="none" stroke="#0a6ad0" stroke-width="2" /><path d="M9 9h4v3l-3 3v-3H9z" fill="#0a6ad0" /></svg>
      <svg width="16" height="16"><rect x="5" y="0" width="6" height="10" rx="3" fill="#0a6ad0" /><path d="M2 7c0 7 12 7 12 0M8 12v4" fill="none" stroke="#0a6ad0" stroke-width="2" /></svg>
      <svg width="16" height="16"><rect x="1" y="2" width="14" height="12" rx="1" fill="none" stroke="#0a6ad0" stroke-width="2" /><path d="M3 6h10M3 8h10" stroke="#0a6ad0" stroke-dasharray="2 1" /><path d="M5 11h6" stroke="#0a6ad0" stroke-width="2" /></svg>
      <svg width="18" height="16"><path d="M5 1h2c1 2 3 2 4 0h2l4 3-2 4h-2v8H4V8H3L1 4z" fill="#ff5c2c" /></svg>
      <svg width="16" height="16"><path d="M1 1h6v6H3L1 5zM10 1h5v6H9V2zM1 9h6v6H1zM9 9h6v5l-1 1H9z" fill="#0a6ad0" /></svg>
      <svg width="20" height="20"><circle cx="10" cy="10" r="9" fill="#fff" stroke="#e6e6ee" /><path d="M2 7l7 1 7-2v4l-5 2-3-1-5 1z" fill="#dc5a2e" /><path d="M4 8l3 1M11 9l3-1" stroke="#222" stroke-width="2" /><path d="M9 14l3 1" stroke="#222" /><path d="M18 3l1 3 1-3z" fill="#f7c21f" /></svg>
    </div>
  </body>
</html>
```
FILE: styles.css
```css
* {
  box-sizing: border-box;
}

body {
  margin: 0;
  height: 100vh;
  overflow: hidden;
  display: flex;
  flex-direction: column;
  background: #bfdbff;
  color: #15428b;
  font-family: "Liberation Sans", "Noto Sans CJK SC", sans-serif;
  font-size: 12px;
  line-height: 16px;
  position: relative;
}

button,
input,
select {
  font: inherit;
  color: inherit;
  margin: 0;
  padding: 0;
  border: 0;
  background: none;
}

button {
  display: flex;
  align-items: center;
  justify-content: center;
  white-space: nowrap;
}

a {
  color: inherit;
  text-decoration: none;
}

p {
  margin: 0;
}

svg {
  flex: none;
}

.symbols {
  position: absolute;
}

/* menu */
.menu {
  height: 20px;
  flex: none;
  display: flex;
  align-items: flex-start;
  padding-left: 4px;
}

.menu a {
  padding: 0 14px;
}

.menu .context-tab {
  margin-left: 4px;
  border-left: 1px solid #a9c8f0;
  border-right: 1px solid #a9c8f0;
  padding: 0 20px 0 16px;
}

.window-tools {
  margin-left: auto;
  display: flex;
  gap: 12px;
  padding-right: 6px;
}

.window-tools button {
  width: 10px;
  height: 14px;
}

.window-tools .help {
  width: 14px;
  border: 1px solid #fff;
  border-radius: 50%;
  background: #2a62c8;
  color: #fff;
  font-size: 11px;
  font-weight: bold;
}

/* ribbon */
.ribbon {
  height: 107px;
  flex: none;
  display: flex;
  gap: 3px;
  padding: 2px 0 3px;
  border: solid #8db2e3;
  border-width: 1px 1px 1px 0;
  border-radius: 0 4px 4px 0;
  box-shadow: inset 0 1px #e6f1ff, 0 1px 1px #88a8cc;
  background: linear-gradient(#dce7f5 0, #dbe6f4 15px, #c8d9ed 17px, #d6e4f3 80px, #e2f6fd);
}

.group {
  flex: none;
  display: flex;
  flex-direction: column;
  border: 1px solid #a4c0dd;
  border-radius: 3px;
  box-shadow: inset 1px 1px #e7f0fa;
  overflow: hidden;
}

.group-body {
  flex: 1;
  display: flex;
  padding: 0 3px;
}

.group-name {
  height: 19px;
  background: #c1d8f0;
  text-align: center;
  color: #3e6aaa;
  line-height: 20px;
  position: relative;
}

.launch {
  position: absolute;
  right: 4px;
  top: 4px;
}

.clip-group {
  width: 20px;
  border-left: 0;
}

.clip-group .group-body {
  padding: 48px 7px 0 0;
  justify-content: flex-end;
  white-space: nowrap;
}

.font-group {
  width: 235px;
}

.align-group {
  width: 229px;
}

.number-group {
  width: 136px;
}

.style-group {
  width: 674px;
}

.cells-group {
  width: 134px;
}

.edit-group {
  width: 176px;
}

.rows {
  display: flex;
  flex-direction: column;
  justify-content: space-around;
  padding-top: 8px;
  padding-bottom: 6px;
}

.tool-row {
  height: 26px;
  display: flex;
  align-items: center;
  gap: 4px;
}

.between {
  justify-content: space-between;
}

.combo {
  height: 26px;
  border: 1px solid #b7c7da;
  background: #ebebeb;
  color: #8d8d8d;
  appearance: none;
  padding-left: 3px;
  opacity: 1;
  background-image: linear-gradient(#aaa, #aaa);
  background-size: 5px 2px;
  background-repeat: no-repeat;
  background-position: right 5px center;
}

.font-name {
  width: 131px;
  margin-right: -5px;
}

.font-size {
  width: 47px;
}

.number-format {
  width: 100%;
}

.set {
  display: flex;
  height: 22px;
  border: 1px solid #93b1dc;
  border-radius: 2px;
  background: linear-gradient(#d3e1f3, #bdd1ec 50%, #c9dbf2);
  box-shadow: inset 0 0 0 1px #dde9f7;
}

.set button {
  width: 22px;
  color: #7482a0;
}

.set button + button {
  border-left: 1px solid #b3c8e6;
}

.set .wide {
  width: 32px;
  gap: 3px;
}

.lines svg {
  fill: none;
  stroke: #5f7297;
}

.letter {
  font-family: "Liberation Serif", serif;
  font-size: 14px;
  font-weight: bold;
}

.letter sup {
  font-size: 8px;
  line-height: 8px;
}

.big {
  font-size: 16px;
}

.italic {
  font-style: italic;
}

.font-color span {
  border-bottom: 4px solid #9d9a97;
  line-height: 12px;
  padding: 0 3px;
}

.pinyin span,
.decimals {
  font-size: 9px;
  line-height: 9px;
}

.split {
  gap: 3px;
}

.wrap-tools {
  border-left: 1px solid #9cb9dd;
  padding-left: 3px;
  margin-left: 2px;
}

.text-tool {
  gap: 4px;
  height: 22px;
  padding: 0 2px;
  justify-content: flex-start;
}

.merge {
  border: 1px solid #c1a877;
  background: linear-gradient(#f3c99c, #fbc76a 50%, #ffe078);
}

.wrap-tools .merge {
  gap: 2px;
}

.off {
  color: #8d8d8d;
}

.style-group .group-body {
  padding: 0 8px 0 1px;
}

.big-tool {
  flex-direction: column;
  justify-content: flex-start;
  gap: 1px;
  padding-top: 5px;
  width: 42px;
}

.big-tool > span {
  line-height: 16px;
}

.big-tool > svg:first-child {
  margin-bottom: 5px;
}

.big-tool > svg:last-child {
  margin-top: 6px;
}

.style-group .big-tool {
  width: 57px;
}

.gallery {
  flex: 1;
  height: 59px;
  margin: 5px 0 0 3px;
  padding: 3px;
  border: 1px solid #bcd3ef;
  background: #d4e4f7;
  display: grid;
  grid-template-columns: repeat(5, 1fr);
  grid-template-rows: 23px 23px;
  gap: 5px 6px;
}

.gallery button {
  justify-content: flex-start;
  padding-left: 4px;
  background: #d8e4f4;
  color: #566fa0;
  font-size: 15px;
}

.gallery .s-small {
  font-family: "Open Sans", sans-serif;
  font-size: 12px;
}

.gallery .s-bold {
  font-weight: bold;
}

.gallery .s-bad {
  background: #c3d0e4;
}

.gallery .s-good {
  background: #dbe8f7;
  font-size: 14px;
}

.gallery .s-neutral {
  background: #e3eefc;
  font-size: 14px;
}

.gallery .s-link {
  text-decoration: underline;
}

.gallery .s-calc {
  background: #c3d0e4;
  border: 1px solid #96a8c8;
  color: #b0bfd6;
}

.gallery .s-check {
  background: #a5b4d0;
  border: 3px double #70819f;
  color: #fff;
  font-weight: bold;
  padding-left: 2px;
}

.gallery-scroll {
  margin-top: 5px;
  height: 59px;
  width: 14px;
  display: grid;
  gap: 1px;
}

.gallery-scroll button {
  background: #e3e8ef;
  border: 1px solid #cdd7e5;
  color: #9a9a9a;
  font-size: 9px;
  line-height: 9px;
}

.gallery-scroll .more {
  text-decoration: overline;
}

.cells-group .group-body {
  padding: 0 1px;
}

.edit-list {
  width: 87px;
  padding-top: 1px;
}

.edit-list .text-tool b {
  width: 14px;
  font-size: 14px;
  text-align: center;
}

.sort-letter {
  font: bold 15px "Liberation Serif", serif;
  fill: #8b97b0;
}

/* message bar */
.message-row {
  display: flex;
  height: 39px;
  flex: none;
  padding-top: 6px;
}

.message {
  flex: 1;
  display: flex;
  align-items: center;
  gap: 10px;
  border: 1px solid #9fc0e6;
  border-left: 0;
  background: linear-gradient(#fff, #e3f2fc);
}

.message span {
  margin-left: -3px;
}

.message button {
  width: 70px;
  height: 21px;
  border: 1px solid #9fb9d8;
  background: #fff;
}

.plain {
  width: 21px;
  height: 18px;
}

/* formula bar */
.formula-row {
  display: flex;
  height: 20px;
  flex: none;
  margin-top: 5px;
  border: 1px solid #6e8fc0;
  border-width: 1px 0;
  background: #cae9cd;
}

.name-box {
  width: 46px;
}

.name-drop {
  width: 18px;
  background: #fff;
  color: #000;
}

.fx {
  width: 78px;
  justify-content: flex-end;
  padding-right: 6px;
  border-right: 1px solid #7f9fd0;
  border-radius: 9px 0 0 9px;
  background: linear-gradient(#eaf2fc, #a9c4ea);
  color: #333;
  font: italic bold 16px "Liberation Serif", serif;
}

.fx i {
  width: 10px;
  height: 10px;
  border-radius: 50%;
  background: linear-gradient(90deg, #a6b7d0, #fff);
  margin-right: auto;
  margin-left: 4px;
}

.fx small {
  font-size: 12px;
}

.formula {
  flex: 1;
}

.expand {
  width: 16px;
  border-left: 1px solid #7f9fd0;
  background: linear-gradient(#fff, #c5d8f2);
}

/* worksheet */
.workbook {
  flex: 1;
  min-height: 0;
  display: flex;
  margin-top: 3px;
}

.sheet {
  flex: 1;
  min-width: 0;
  display: flex;
  flex-direction: column;
}

.col-heads {
  height: 20px;
  flex: none;
  overflow: hidden;
  display: grid;
  grid-template-columns: 51px 44px 143px 93px 81px 72px 49px 89px 281px 140px 78px 72px 72px 72px 137px 72px 72px 72px 72px 72px;
  border-top: 1px solid #6e8fc0;
  border-bottom: 1px solid #8fabd0;
  background: linear-gradient(#f6f9fd, #d5dee9);
  color: #26384d;
  font-family: "Liberation Serif", serif;
  font-size: 15px;
  line-height: 20px;
  text-align: center;
}

.col-heads span {
  border-right: 1px solid #9eb6ce;
}

.sheet-body {
  flex: 1;
  min-height: 0;
  display: flex;
  overflow: hidden;
  color: #000;
}

.cells {
  width: 586px;
  flex: none;
  overflow: hidden;
  background: #fff;
  position: relative;
}

.cells table {
  width: 622px;
  table-layout: fixed;
  border-spacing: 0;
  font-size: 13px;
}

.w-a { width: 51px; }
.w-b { width: 44px; }
.w-c { width: 143px; }
.w-d { width: 93px; }
.w-e { width: 81px; }
.w-f { width: 72px; }
.w-g { width: 49px; }
.w-h { width: 89px; }

.h26 { height: 26px; }
.h29 { height: 29px; }
.h30 { height: 30px; }
.h41 { height: 41px; }
.h59 { height: 59px; }
.h63 { height: 63px; }
.h74 { height: 74px; }
.h81 { height: 81px; }

.cells td {
  padding: 0 0 2px;
  border: solid #000;
  border-width: 0 1px 1px 0;
  text-align: center;
  white-space: nowrap;
  position: relative;
}

.cells .no {
  font-family: "Liberation Serif", serif;
  font-size: 16px;
  font-weight: bold;
  padding: 2px 0 0;
}

.cells .left {
  text-align: left;
  padding-left: 2px;
}

.label {
  font-weight: bold;
}

.other {
  background: #daeef3;
}

.green {
  background: #cae9cd;
}

.yellow {
  background: #ff0;
}

.orange {
  background: #ffc000;
}

.pale {
  background: #e8f0dc;
}

.blue {
  color: #1414c8;
}

.red {
  color: #e41414;
}

/* comment corner */
.noted::after {
  content: "";
  position: absolute;
  top: 0;
  right: 0;
  border: 3px solid #d01818;
  border-left-color: transparent;
  border-bottom-color: transparent;
}

.side div {
  display: flex;
  flex-direction: column;
  align-items: flex-end;
  width: 50px;
  overflow: hidden;
  padding-right: 8px;
  font-size: 15px;
  font-weight: bold;
  line-height: 18px;
}

.cells .top {
  vertical-align: top;
  padding-top: 12px;
}

.loose div {
  line-height: 22px;
}

.side .blue {
  font-weight: normal;
}

.side .in-half {
  padding-right: 8px;
}

.side .in-1 {
  padding-right: 15px;
}

.side .in-3 {
  padding-right: 36px;
}

.mark {
  position: absolute;
  left: 225px;
  top: 301px;
  filter: drop-shadow(2px 3px 2px rgba(0, 0, 0, 0.4));
}

/* layer list */
.layers {
  width: 154px;
  flex: none;
  position: relative;
  background: #53ceae;
  border-left: 2px solid #2d7a68;
  border-right: 1px solid #b4f0dc;
  font-family: "Liberation Mono", monospace;
  font-weight: bold;
  font-size: 15px;
  white-space: nowrap;
}

.job,
.step {
  height: 19px;
  margin-right: 1px;
  padding-left: 2px;
  border: 1px solid #000;
  background: #9bdcda;
  line-height: 17px;
}

.job {
  height: 10px;
  border-top: 0;
  display: flex;
  align-items: flex-end;
  overflow: hidden;
}

.matrix {
  margin: 2px 1px 3px 0;
  padding: 2px;
  border: 1px solid #000;
}

.matrix button {
  width: 100%;
  height: 21px;
  justify-content: flex-start;
  padding-left: 2px;
  background: #9bdcda;
  border: 2px solid #c9f5ef;
  border-right-color: #438a82;
  border-bottom-color: #438a82;
}

.layer-well {
  width: 126px;
  border: 2px solid #b4f0dc;
  border-top: 2px solid #2d7a68;
  border-left: 1px solid #2d7a68;
  padding: 2px 0 0 1px;
}

.layer-box {
  border: 1px solid #000;
  padding: 1px 2px 9px 1px;
  display: grid;
  gap: 3px;
}

.layer-set {
  background: #000;
  padding: 1px;
  font-size: 11px;
}

.layer-set label {
  display: grid;
  grid-template-columns: 14px 14px 1fr;
  gap: 2px;
  height: 16px;
  padding: 1px;
  line-height: 14px;
  position: relative;
}

.layer-set span {
  background: #9bdcda;
  padding-left: 1px;
}

.layer-set label > svg {
  position: absolute;
  right: 3px;
  top: 5px;
}

.layer-set input {
  appearance: none;
  width: 14px;
  height: 14px;
  border: 2px solid #fff;
  background: #fff;
  box-shadow: inset 0 0 0 2px #000;
}

.layer-set .picked {
  border-color: #0000b8;
}

.shown {
  background: #479900;
}

.work {
  background: #e61010;
  display: flex;
}

.white span {
  background: #fff;
}

.mask span {
  background: #00a57b;
}

.signal span {
  background: #ffc64f;
}

.drill span {
  background: #9ab4bf;
}

.rout span {
  background: #dcdcdc;
}

.handle {
  position: absolute;
  left: -6px;
  top: 418px;
  width: 8px;
  height: 8px;
  border: 1px solid #7f9db5;
  background: #dff2fa;
}

/* board */
.board {
  flex: 1;
  min-width: 0;
  background: #000;
  position: relative;
  overflow: hidden;
}

.plot {
  position: absolute;
  left: 0;
  top: 0;
  shape-rendering: crispEdges;
  stroke-linecap: square;
}

.plot path {
  fill: none;
}

.green-l { stroke: #479908; stroke-width: 26px; stroke-linecap: round; }
.olive-l { stroke: #a39a0c; stroke-width: 12px; }
.green-m { stroke: #479908; stroke-width: 17px; }
.olive-m { stroke: #a39a0c; stroke-width: 9px; }
.green-s { stroke: #5c9414; stroke-width: 10px; }
.olive-s { stroke: #9c9c20; stroke-width: 5px; }
.orange-m { stroke: #bd9704; stroke-width: 15px; }
.dot-g { stroke: #468c14; stroke-width: 6px; }
.dot-o { stroke: #a89a1c; stroke-width: 6px; }
.dot-r { stroke: #c06414; stroke-width: 6px; }
.tall-g { stroke: #468c14; stroke-width: 8px; }
.strip-g { stroke: #468c14; stroke-width: 9px; stroke-linecap: butt; }
.oval-g { stroke: #479908; stroke-width: 9px; stroke-linecap: round; }
.bar-g { stroke: #479908; stroke-width: 13px; stroke-linecap: round; }
.rows-g { stroke: #468c14; stroke-width: 6px; stroke-linecap: butt; stroke-dasharray: 8px 2px; }
.cols-g { stroke: #468c14; stroke-width: 7px; stroke-linecap: butt; stroke-dasharray: 7px 4px; }
.block-g { stroke: #479908; stroke-width: 9px; stroke-linecap: butt; stroke-dasharray: 9px 3px; }

.big-green {
  fill: #479900;
}

g.orange {
  fill: #bd9704;
}

.ring {
  stroke: #e61400;
  stroke-width: 3px;
}

.ring-thin {
  stroke: #e65000;
  stroke-width: 3px;
}

.hole {
  fill: #2d6bff;
  stroke: #35c0ff;
  stroke-width: 2px;
}

.lit {
  fill: #4070f0;
}

.outline {
  stroke: #fff;
}

.circled {
  fill: none;
  stroke: #ffff28;
  stroke-width: 2px;
}

.ticks {
  position: relative;
  display: grid;
  grid-template-columns: 74px 74px;
  grid-template-rows: 30px 30px 30px 59px 30px 30px 30px 41px 30px 30px 26px 74px 63px 81px repeat(6, 29px);
  margin-left: 336px;
  width: 148px;
}

.ticks input {
  appearance: none;
  width: 13px;
  height: 13px;
  margin-top: 8px;
  border: 2px solid #8a8a8a;
  border-right-color: #f4f4f4;
  border-bottom-color: #f4f4f4;
  background: #cae9cd;
}

.ticks input:nth-child(even) {
  margin-top: 10px;
}

.ticks .mid {
  align-self: center;
}

.ticks .mid,
.ticks .mid:nth-child(even) {
  margin-top: 0;
}

/* scroll bars */
.vscroll {
  width: 16px;
  flex: none;
  display: flex;
  flex-direction: column;
  background: #7f9dcb;
  border-left: 1px solid #5d7db2;
}

.vscroll button {
  height: 18px;
  color: #3f5475;
}

.vscroll .split-box {
  height: 7px;
  background: #eef5ff;
  border: 1px solid #5d7db2;
}

.vtrack {
  flex: 1;
  padding-top: 25px;
}

.vthumb,
.hthumb {
  display: flex;
  align-items: center;
  justify-content: center;
  border: 1px solid #56719c;
  border-radius: 2px;
}

.vthumb {
  height: 43%;
  background: linear-gradient(90deg, #f5f7fa, #c0cbdc);
}

.tab-row {
  height: 17px;
  flex: none;
  display: flex;
  background: linear-gradient(#8cabd8, #a3bde3);
  border-top: 1px solid #b6cdee;
  border-bottom: 2px solid #57719c;
}

.sheet-tabs {
  flex: 1;
  display: flex;
  font-size: 14px;
  line-height: 14px;
}

.sheet-tabs a {
  padding: 0 7px 0 8px;
  position: relative;
  z-index: 0;
}

.sheet-tabs a::before {
  content: "";
  position: absolute;
  inset: 0 -3px 0 0;
  z-index: -1;
  transform: skewX(-35deg);
  border: 1px solid #7d99c6;
  border-top: 0;
  background: linear-gradient(#e6f0fd, #bcd3f2);
}

.sheet-tabs .cut {
  margin-left: -8px;
  padding: 0 8px 0 0;
}

.sheet-tabs .new-tab {
  width: 36px;
}

.hscroll {
  width: 777px;
  display: flex;
}

.hscroll .split-box {
  width: 7px;
  background: #eef5ff;
  border: 2px solid #c3d8f4;
  outline: 1px solid #56719c;
}

.hscroll button {
  width: 17px;
}

.hscroll .split-box:last-child {
  margin-right: 16px;
}

.htrack {
  flex: 1;
}

.hthumb {
  width: 91%;
  height: 14px;
  background: linear-gradient(#f5f7fa, #dce2ea 50%, #aebdd1);
}

/* status bar */
.status {
  height: 20px;
  flex: none;
  display: flex;
  align-items: center;
  justify-content: flex-end;
  padding-right: 5px;
  background: linear-gradient(#dfebfb, #cadffa 6px, #b3cff5 7px, #d5e6fb);
}

.views {
  display: flex;
  margin-right: 9px;
  border: 1px solid #8aa6d2;
  border-radius: 2px;
}

.views button {
  width: 18px;
  height: 16px;
}

.views .on {
  background: linear-gradient(#fde1a8, #fbc152);
}

.percent {
  font-size: 13px;
  margin-right: 8px;
}

.round {
  width: 16px;
  height: 16px;
  border: 1px solid #5f79a5;
  border-radius: 50%;
  background: #eff5fd;
  color: #33445f;
  font-size: 16px;
  font-weight: bold;
  line-height: 12px;
}

.status input {
  appearance: none;
  width: 102px;
  height: 14px;
  background: linear-gradient(#6f8bb8, #6f8bb8) center / 100% 1px no-repeat;
}

.status input::-webkit-slider-thumb {
  appearance: none;
  width: 9px;
  height: 13px;
  border: 1px solid #5f79a5;
  border-radius: 1px 1px 5px 5px;
  background: #e6effb;
}

/* taskbar */
.taskbar {
  height: 10px;
  flex: none;
  display: flex;
  align-items: flex-end;
  overflow: hidden;
  background: linear-gradient(90deg, #e8eff6, #d8dcee 30%, #dadfef 60%, #e6ebf4);
}

.app {
  height: 1px;
  width: 14px;
  margin-right: 30px;
}

.grey { background: #8b93a3; margin-left: 111px; }
.lime { background: #8cc63f; }
.cyan { background: #24c1de; margin-right: 117px; }
.navy { background: #3850b8; width: 22px; margin-right: 646px; }
.jade { background: #12a36b; margin-left: 14px; }

.active-app {
  width: 92px;
  height: 9px;
  border-radius: 3px 3px 0 0;
  background: #f1f4fa;
}

.taskbar time {
  margin-left: auto;
  margin-right: 57px;
  height: 6px;
  color: #111;
}

/* input method bar */
.ime {
  position: absolute;
  right: 0;
  bottom: 76px;
  width: 198px;
  height: 26px;
  display: flex;
  align-items: center;
  justify-content: space-between;
  border-radius: 3px;
  background: #fff;
  color: #0a6ad0;
}

.ime > svg:first-child {
  margin-left: -6px;
}

.ime b {
  font-size: 15px;
}

.ime-s {
  font: bold 26px "Liberation Sans", sans-serif;
  fill: #fff;
}
```
